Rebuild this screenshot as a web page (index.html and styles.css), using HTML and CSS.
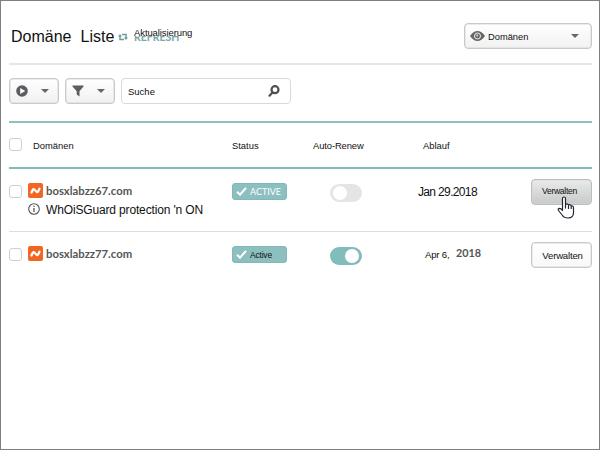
FILE: index.html
```
<!DOCTYPE html>
<html lang="de">
<head>
<meta charset="utf-8">
<title>Domäne Liste</title>
<link rel="stylesheet" href="styles.css">
</head>
<body>
<main class="page">
  <header class="header">
    <h1 class="title"><span>Domäne</span><span>Liste</span></h1>
    <svg class="refresh-icon" viewBox="0 0 10 8"><path d="M2 2.500v4h4M8 5.500v-4H4" fill="none" stroke="#6b9c9c" stroke-width="1.500"/><path d="M0 3.600L2 1l2 2.600zM6 4.400L8 7l2-2.600z" fill="#6b9c9c"/></svg>
    <div class="refresh"><span class="refresh-under">REFRESH</span><span class="refresh-label">Aktualisierung</span></div>
    <button class="btn view">
      <svg class="eye" viewBox="0 0 15 10"><path d="M0 5Q3.400 0 7.500 0T15 5Q11.600 10 7.500 10T0 5z" fill="#666"/><circle cx="7.500" cy="5" r="3" fill="none" stroke="#fff" stroke-width=".9"/><circle cx="7.200" cy="4.500" r=".9" fill="#ddd"/></svg>
      <span class="view-label">Domänen</span><i class="caret"></i>
    </button>
  </header>
  <section class="toolbar">
    <button class="btn tool"><svg class="play" viewBox="0 0 12 12"><circle cx="6" cy="6" r="5.800" fill="#5c5d60"/><path d="M4.200 2.900L9.200 6 4.200 9.100z" fill="#fff"/></svg><i class="caret"></i></button>
    <button class="btn tool"><svg class="funnel" viewBox="0 0 12 12"><path d="M.5.5h11v1L7.500 6.300v5.200L4.700 9.400V6.300L.5 1.500z" fill="#5c5d60"/></svg><i class="caret"></i></button>
    <div class="search"><span>Suche</span><svg class="lens" viewBox="0 0 12 12"><circle cx="7" cy="4.700" r="3.500" fill="none" stroke="#4e4f52" stroke-width="2.200"/><path d="M4.500 7.500L1.500 10.700" stroke="#4e4f52" stroke-width="2.200" stroke-linecap="round"/></svg></div>
  </section>
  <section class="grid head">
    <i class="check"></i><span class="col-domain">Domänen</span><span>Status</span><span class="col-renew">Auto-Renew</span><span class="col-expiry">Ablauf</span>
  </section>
  <section class="grid row first">
    <i class="check"></i>
    <div class="domain">
      <svg class="logo" viewBox="0 0 15 15"><rect width="15" height="15" rx="2" fill="#f36523"/><path d="M3.500 9.500Q5 5.500 6.100 6.200L8.800 9Q10 9.500 11.500 5.700" fill="none" stroke="#fff" stroke-width="2.300" stroke-linecap="round" stroke-linejoin="round"/></svg>
      <span class="name">bosxlabzz67.com</span>
      <svg class="info" viewBox="0 0 12 12"><circle cx="6" cy="6" r="5.300" fill="none" stroke="#555" stroke-width="1.100"/><path d="M6 5v4M6 2.800v1.300" fill="none" stroke="#555" stroke-width="1.300"/></svg>
      <span class="guard">WhOiSGuard protection 'n ON</span>
    </div>
    <div class="badge"><svg class="tick" viewBox="0 0 11 9"><path d="M1 4.800l3 2.900L10 .8" fill="none" stroke="#fff" stroke-width="2"/></svg><span class="active-caps">ACTIVE</span></div>
    <i class="toggle"></i>
    <span class="date">Jan 29.2018</span>
    <button class="btn manage pressed">Verwalten<svg class="cursor" viewBox="0 0 18 23"><path d="M5.500 14.500V2.500Q5.500 1 7 1t1.500 1.500V8.500Q10 7 11.500 8.900 13.200 8 14.200 10 16.500 9.300 16.500 12v4.500q0 5.500-5.500 5.500Q7 22 5.500 19.500L1.500 14.500Q.5 12.500 2.500 12.300 4 12.300 5.500 14.500zM8.500 8.500v4M11.500 9v4M14.200 10v3" fill="#fff" stroke="#222631" stroke-width="1.200" stroke-linejoin="round"/></svg></button>
  </section>
  <section class="grid row second">
    <i class="check"></i>
    <div class="domain">
      <svg class="logo" viewBox="0 0 15 15"><rect width="15" height="15" rx="2" fill="#f36523"/><path d="M3.500 9.500Q5 5.500 6.100 6.200L8.800 9Q10 9.500 11.500 5.700" fill="none" stroke="#fff" stroke-width="2.300" stroke-linecap="round" stroke-linejoin="round"/></svg>
      <span class="name">bosxlabzz77.com</span>
    </div>
    <div class="badge"><svg class="tick" viewBox="0 0 11 9"><path d="M1 4.800l3 2.900L10 .8" fill="none" stroke="#fff" stroke-width="2"/></svg><span class="active-word">Active</span></div>
    <i class="toggle on"></i>
    <span class="date-split"><span class="day">Apr 6,</span><b class="year">2018</b></span>
    <button class="btn manage normal">Verwalten</button>
  </section>
</main>
</body>
</html>
```

FILE: styles.css
```
* { box-sizing: border-box; }
body { margin: 0; background: #fff; color: #111; font-family: "Liberation Sans", Arial, sans-serif; }
.page { width: 600px; height: 450px; border: 1px solid #7f7f7f; padding: 0 7px 0 8px; overflow: hidden; }
svg { display: block; flex: none; }
button { font-family: inherit; color: #111; }
.btn { height: 26px; padding: 0; border: 1px solid #c9c9c9; border-radius: 4px; background: linear-gradient(#fff, #f1f1f1); box-shadow: inset 0 0 0 .5px #d8d8d8; display: flex; align-items: center; }
.caret { border: 4px solid transparent; border-top-color: #666; border-bottom: 0; }

.header { height: 64px; border-bottom: 2px solid #e6e6e6; display: flex; align-items: flex-start; }
.title { margin: 26px 0 0 2px; font-size: 16px; line-height: 19px; font-weight: 400; display: flex; gap: 9px; width: 107px; }
.refresh-icon { width: 10px; height: 8px; margin-top: 32px; }
.refresh { display: grid; margin: 26px 0 0 6px; line-height: 12px; }
.refresh > span { grid-area: 1 / 1; }
.refresh-label { font-size: 9.5px; letter-spacing: -.1px; }
.refresh-under { font-family: Lato, sans-serif; font-size: 10.5px; font-weight: 700; color: #7aa5a5; padding-top: 4px; clip-path: inset(9px 0 0 0); }
.view { width: 128px; margin: 22px 0 0 auto; padding: 0 12px 0 5px; }
.eye { width: 15px; height: 10px; }
.view-label { font-size: 9.3px; margin: 2px auto 0 3px; }

.toolbar { height: 58px; border-bottom: 2px solid #8cc1c1; padding-top: 13px; display: flex; }
.tool { width: 50px; margin-right: 6px; justify-content: space-between; padding: 0 9px 0 6px; }
.play, .funnel { width: 12px; height: 12px; }
.search { width: 170px; height: 26px; border: 1px solid #d9d9d9; border-radius: 4px; display: flex; align-items: center; justify-content: space-between; padding: 0 10px 0 6px; font-size: 9.5px; }
.lens { width: 12px; height: 12px; }

.grid { display: grid; grid-template-columns: 19px 204px 98px 88px 113px 60px; align-items: start; }
.head { height: 46px; border-bottom: 2px solid #7fbdbd; padding-top: 15px; font-size: 9.4px; line-height: 15px; }
.check { width: 13px; height: 13px; border: 1px solid #cfcfcf; border-radius: 3px; }
.col-domain { padding-left: 5px; }
.col-renew { margin-left: -17px; letter-spacing: -.1px; }
.col-expiry { padding-left: 5px; }
.row .check { margin-top: 6px; }
.first { height: 63px; padding-top: 10px; border-bottom: 1px solid #dedede; }
.second { padding-top: 10px; }
.domain { display: grid; grid-template-columns: 15px auto; column-gap: 3px; margin-top: 4px; align-items: center; justify-content: start; }
.logo { width: 15px; height: 15px; }
.name { font: 700 11.3px/15px Lato, sans-serif; color: #555; }
.info { width: 12px; height: 12px; margin-top: 1px; }
.guard { font-size: 12px; line-height: 16px; margin-top: 4px; letter-spacing: -.15px; white-space: nowrap; }
.badge { width: 55px; height: 17px; margin-top: 4px; border-radius: 3px; background: #8cc0c0; border: 1px solid #82b8b8; display: flex; align-items: center; padding-left: 3px; }
.tick { width: 11px; height: 9px; }
.active-caps { font: 400 9px/15px Lato, sans-serif; color: #fff; margin-left: 3px; }
.active-word { font-size: 8.5px; margin-left: 3px; letter-spacing: -.2px; }
.toggle { width: 32px; height: 18px; border-radius: 9px; background: #e5e5e5; padding: 2px 3px; margin-top: 5px; display: flex; }
.toggle::before { content: ""; width: 14px; height: 14px; border-radius: 50%; background: #fff; }
.toggle.on { background: #83bcbc; justify-content: flex-end; }
.date { font-size: 12px; line-height: 16px; margin-top: 5px; letter-spacing: -.65px; }
.date-split { display: flex; margin-top: 4px; line-height: 16px; }
.day { font-size: 9.6px; margin-left: 7px; width: 31px; padding-top: 1px; letter-spacing: -.2px; }
.year { font: 700 10.8px/14px Lato, sans-serif; color: #555; }
.manage { width: 61px; justify-content: center; position: relative; }
.normal { font-size: 9.6px; letter-spacing: -.2px; padding: 0 0 0 2px; background: linear-gradient(#fff, #f8f8f8); }
.pressed { font-size: 8.6px; letter-spacing: -.3px; padding: 0 4px 2px 0; border-color: #bdbdbd; background: linear-gradient(#e9eaea, #c8caca); }
.cursor { position: absolute; left: 25px; top: 16px; width: 18px; height: 23px; }
```
